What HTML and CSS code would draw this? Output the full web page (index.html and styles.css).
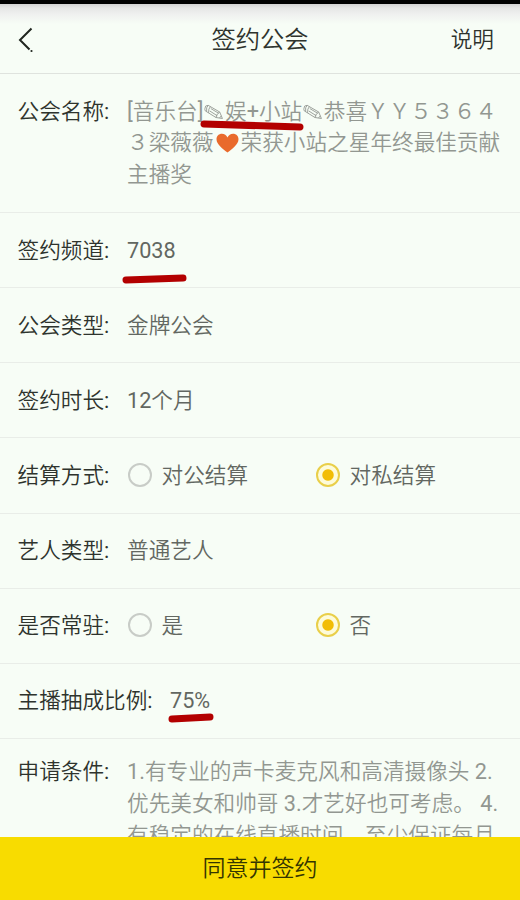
FILE: index.html
```html
<!DOCTYPE html>
<html lang="zh-CN">
<head>
<meta charset="utf-8">
<title>签约公会</title>
<link rel="stylesheet" href="styles.css">
</head>
<body>
<div class="app">
  <div class="status"></div>
  <header class="header">
    <svg class="back" width="16" height="26" viewBox="0 0 16 26"><path d="M13.500 1.500 2 13l9.500 9.500" fill="none" stroke="#20251f" stroke-width="2"/><circle cx="13.500" cy="24" r="1.100" fill="#20251f"/></svg>
    <h1 class="title">签约公会</h1>
    <span class="help">说明</span>
  </header>
  <main class="form">
    <section class="row row-name">
      <span class="label">公会名称<span class="latin">:</span></span>
      <div class="value muted">
        <div class="line"><span class="latin">[</span>音乐台<span class="latin">]</span><span class="marked"><svg class="pencil" viewBox="0 0 22 20"><g fill="none" stroke="currentColor" stroke-width=".9"><path d="M2 5.200Q2 2 5.300 2.200L17 9l2.800 6.600-6.600-1L2.300 7.800Q1.600 6.400 2 5.200Z"/><path d="M5.300 2.200Q3 4 3.700 8.500M7.500 3.500Q5.400 5.500 5.700 9.800M8 5.500l8 4.800M7 8l7.500 4.800M17 9q-3 1.500-3.800 5.600M18.500 13q-1 .7-1.500 2"/></g></svg>娱<span class="latin">+</span>小站<svg class="stroke" width="106" height="14" viewBox="0 0 106 14"><path d="M5 5 101 8" stroke="#b30000" stroke-width="7" stroke-linecap="round"/></svg></span><svg class="pencil" viewBox="0 0 22 20"><g fill="none" stroke="currentColor" stroke-width=".9"><path d="M2 5.200Q2 2 5.300 2.200L17 9l2.800 6.600-6.600-1L2.300 7.800Q1.600 6.400 2 5.200Z"/><path d="M5.300 2.200Q3 4 3.700 8.500M7.500 3.500Q5.400 5.500 5.700 9.800M8 5.500l8 4.800M7 8l7.500 4.800M17 9q-3 1.500-3.800 5.600M18.500 13q-1 .7-1.500 2"/></g></svg>恭喜ＹＹ５３６４</div>
        <div class="line">３梁薇薇<svg class="heart" viewBox="0 0 27 22"><path d="M13.500 20.500C9 17 2.500 12.500 2.500 7.200 2.500 4 5 1.800 7.900 1.800c2.500 0 4.600 1.500 5.600 3.700 1-2.200 3.100-3.700 5.600-3.700 2.900 0 5.400 2.200 5.400 5.400 0 5.300-6.500 9.800-11 13.300Z" fill="#e96a2c"/></svg>荣获小站之星年终最佳贡献</div>
        <div class="line">主播奖</div>
      </div>
    </section>
    <section class="row">
      <span class="label">签约频道<span class="latin">:</span></span>
      <span class="value marked latin">7038<svg class="stroke stroke-channel" width="70" height="14" viewBox="0 0 70 14"><path d="M6 8 63 6" stroke="#b30000" stroke-width="7" stroke-linecap="round"/></svg></span>
    </section>
    <section class="row">
      <span class="label">公会类型<span class="latin">:</span></span>
      <span class="value">金牌公会</span>
    </section>
    <section class="row">
      <span class="label">签约时长<span class="latin">:</span></span>
      <span class="value"><span class="latin">12</span>个月</span>
    </section>
    <section class="row">
      <span class="label">结算方式<span class="latin">:</span></span>
      <div class="options">
        <span class="option"><i class="radio"></i>对公结算</span>
        <span class="option"><i class="radio on"></i>对私结算</span>
      </div>
    </section>
    <section class="row">
      <span class="label">艺人类型<span class="latin">:</span></span>
      <span class="value">普通艺人</span>
    </section>
    <section class="row">
      <span class="label">是否常驻<span class="latin">:</span></span>
      <div class="options">
        <span class="option"><i class="radio"></i>是</span>
        <span class="option"><i class="radio on"></i>否</span>
      </div>
    </section>
    <section class="row">
      <span class="label label-wide">主播抽成比例<span class="latin">:</span></span>
      <span class="value marked latin">75%<svg class="stroke stroke-rate" width="50" height="14" viewBox="0 0 50 14"><path d="M5 8 43 6" stroke="#b30000" stroke-width="7" stroke-linecap="round"/></svg></span>
    </section>
    <section class="row row-terms">
      <span class="label">申请条件<span class="latin">:</span></span>
      <div class="value muted">
        <div class="line"><span class="latin">1.</span>有专业的声卡麦克风和高清摄像头<span class="latin"> 2.</span></div>
        <div class="line">优先美女和帅哥<span class="latin"> 3.</span>才艺好也可考虑。<span class="latin"> 4.</span></div>
        <div class="line">有稳定的在线直播时间，至少保证每月</div>
      </div>
    </section>
  </main>
  <footer class="submit">同意并签约</footer>
</div>
</body>
</html>
```
FILE: styles.css
```css
* {
  box-sizing: border-box;
}

body {
  margin: 0;
  background: #f7fdf6;
  color: #2e332d;
  font-family: Roboto, "Noto Sans CJK SC", sans-serif;
  font-size: 21.65px;
  font-weight: 350;
  line-height: 32px;
}

.latin {
  font-weight: 400;
}

.app {
  display: flex;
  flex-direction: column;
  width: 520px;
  height: 900px;
  overflow: hidden;
}

.status {
  flex: none;
  height: 24px;
  background: linear-gradient(#000 4px, #d2d2d2 4px, #e5e6e5 8px, #eff0ef 14px, #f7fdf6 24px);
}

.header {
  flex: none;
  display: grid;
  grid-template-columns: 1fr auto 1fr;
  align-items: center;
  height: 50px;
  padding: 0 26px 18px 18px;
  border-bottom: 1px solid #dfe3de;
}

.back {
  display: block;
}

.title {
  margin: 0 0 0 8px;
  font-size: 24.3px;
  font-weight: 350;
}

.help {
  justify-self: end;
}

.form {
  flex: 1;
  min-height: 0;
  overflow: hidden;
}

.row {
  display: flex;
  align-items: center;
  height: 75.15px;
  padding: 1px 0 0 17.5px;
  border-bottom: 1px solid #e9ede8;
}

.row-name {
  align-items: flex-start;
  height: 139px;
  padding-top: 21.5px;
}

.row-terms {
  align-items: flex-start;
  height: 130px;
  padding-top: 17px;
}

.label {
  flex: none;
  width: 109.5px;
  white-space: nowrap;
}

.label-wide {
  width: 152.5px;
}

.value {
  color: #626761;
  white-space: nowrap;
}

.muted {
  color: #929791;
}

.line {
  height: 31.9px;
}

.marked {
  position: relative;
}

.stroke {
  position: absolute;
  left: -4px;
  top: 20px;
  fill: none;
}

.stroke-channel {
  left: -7px;
  top: 37px;
}

.stroke-rate {
  left: -3px;
  top: 26px;
}

.pencil {
  width: 21.6px;
  height: 20px;
  vertical-align: -4px;
}

.heart {
  width: 27px;
  height: 22px;
  vertical-align: -4px;
}

.options {
  display: grid;
  grid-template-columns: 188px auto;
  color: #626761;
}

.option {
  display: flex;
  align-items: center;
  gap: 9.5px;
  padding-left: 1px;
}

.radio {
  width: 24px;
  height: 24px;
  margin-top: -2px;
  border: 2px solid #c8ccc7;
  border-radius: 50%;
}

.radio.on {
  border-color: #e9cf4a;
  background: radial-gradient(circle, #f2bd05 5.2px, #fdfbd9 6.2px);
}

.submit {
  flex: none;
  display: flex;
  align-items: center;
  justify-content: center;
  height: 63px;
  background: #f8dc00;
  color: #343500;
  font-size: 23px;
}
```
